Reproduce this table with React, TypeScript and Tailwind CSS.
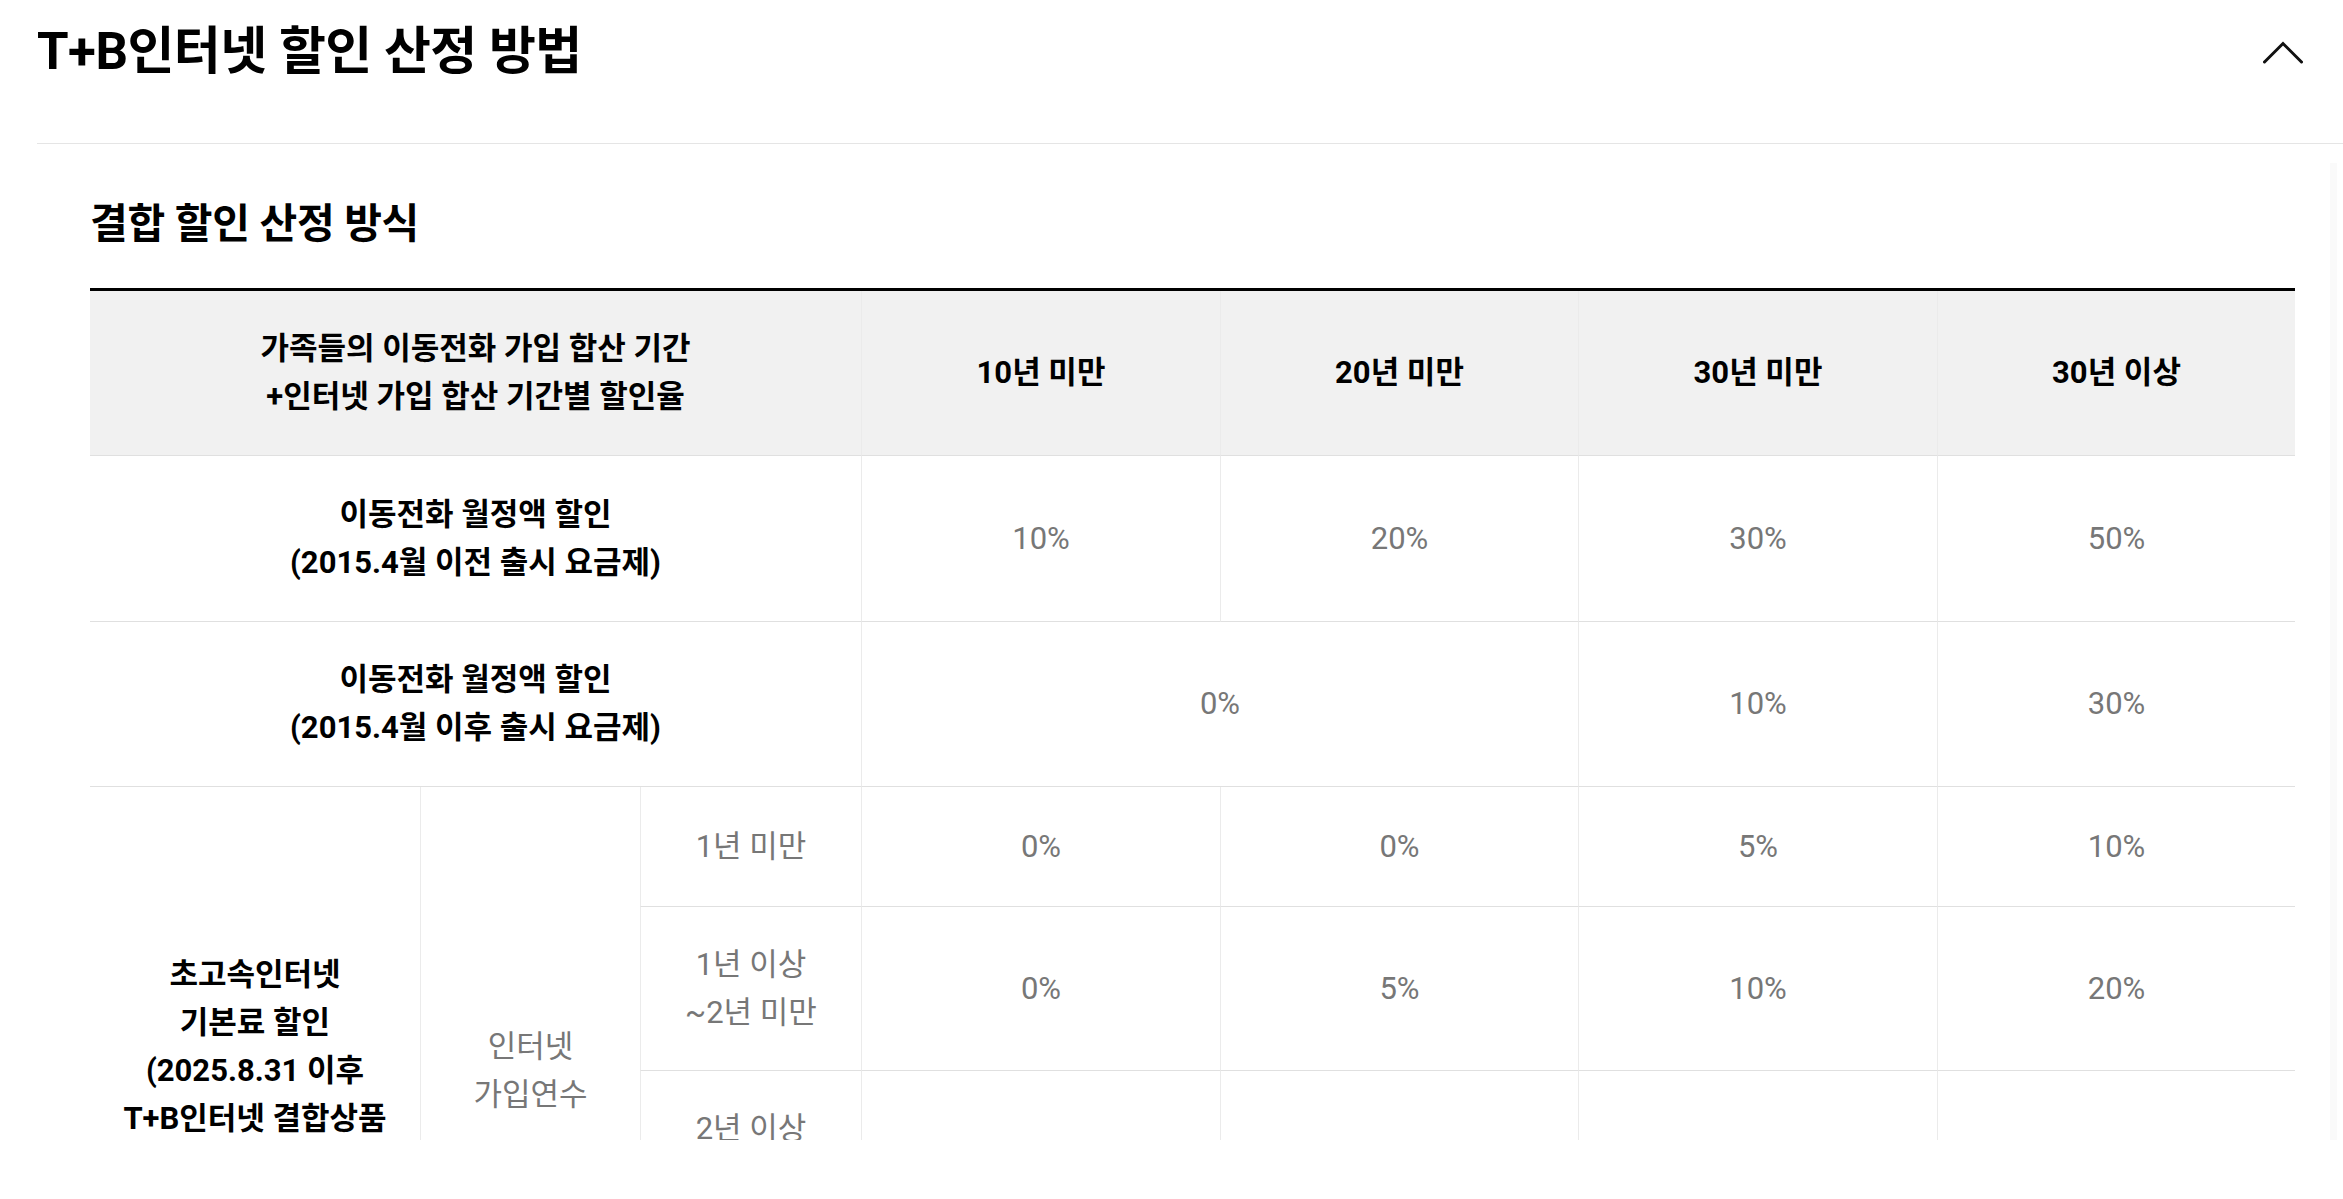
import React from "react";

type CellProps = {
  children?: React.ReactNode;
  className?: string;
  left?: boolean;
  kind?: "head" | "label" | "value";
};

function Cell({ children, className = "", left = true, kind = "value" }: CellProps) {
  const base =
    "flex items-center justify-center text-center border-b border-b-[#e0e0e0] text-[31px] leading-[48px]";
  const leftB = left ? " border-l border-l-[#ebebeb]" : "";
  const k =
    kind === "head"
      ? " bg-[#f1f1f1] font-bold text-black"
      : kind === "label"
      ? " font-bold text-black"
      : " text-[#777777]";
  return <div className={base + leftB + k + " " + className}>{children}</div>;
}

export default function App() {
  return (
    <div className="w-[2343px] h-[1199px] bg-white font-['Roboto','Noto_Sans_CJK_KR',sans-serif] text-black overflow-hidden">
      <div className="pl-[37px]">
        <div className="flex justify-between h-[144px] border-b border-b-[#e5e5e5] pr-[40px]">
          <h2 className="mt-[22px] text-[51px] leading-[60px] font-bold tracking-[-0.5px]">
            T+B인터넷 할인 산정 방법
          </h2>
          <svg
            className="mt-[41px]"
            width="40"
            height="23"
            viewBox="0 0 40 23"
            fill="none"
            stroke="#111"
            strokeWidth="3"
            strokeLinecap="round"
          >
            <polyline points="1.5,21 20,2.5 38.5,21" />
          </svg>
        </div>
        <div className="flex h-[996px] overflow-hidden">
          <div className="flex-1 pl-[53px] pt-[56px]">
            <h3 className="text-[41px] leading-[48px] font-bold tracking-[-0.3px]">
              결합 할인 산정 방식
            </h3>
            <div className="mt-[40px] w-[2205px] border-t-[3px] border-t-black grid grid-cols-[330px_220px_221px_359px_358px_359px_358px] grid-rows-[165px_166px_165px_120px_164px_164px_120px]">
              {/* header */}
              <Cell kind="head" left={false} className="col-span-3">
                <span>
                  가족들의 이동전화 가입 합산 기간
                  <br />
                  +인터넷 가입 합산 기간별 할인율
                </span>
              </Cell>
              <Cell kind="head">10년 미만</Cell>
              <Cell kind="head">20년 미만</Cell>
              <Cell kind="head">30년 미만</Cell>
              <Cell kind="head">30년 이상</Cell>

              {/* row 1 */}
              <Cell kind="label" left={false} className="col-span-3">
                <span>
                  이동전화 월정액 할인
                  <br />
                  (2015.4월 이전 출시 요금제)
                </span>
              </Cell>
              <Cell>10%</Cell>
              <Cell>20%</Cell>
              <Cell>30%</Cell>
              <Cell>50%</Cell>

              {/* row 2 */}
              <Cell kind="label" left={false} className="col-span-3">
                <span>
                  이동전화 월정액 할인
                  <br />
                  (2015.4월 이후 출시 요금제)
                </span>
              </Cell>
              <Cell className="col-span-2">0%</Cell>
              <Cell>10%</Cell>
              <Cell>30%</Cell>

              {/* row 3 */}
              <Cell kind="label" left={false} className="row-span-4">
                <span>
                  초고속인터넷
                  <br />
                  기본료 할인
                  <br />
                  (2025.8.31 이후
                  <br />
                  T+B인터넷 결합상품
                  <br />
                  가입 고객)
                </span>
              </Cell>
              <Cell className="row-span-4">
                <span>
                  인터넷
                  <br />
                  가입연수
                </span>
              </Cell>
              <Cell>1년 미만</Cell>
              <Cell>0%</Cell>
              <Cell>0%</Cell>
              <Cell>5%</Cell>
              <Cell>10%</Cell>

              {/* row 4 */}
              <Cell>
                <span>
                  1년 이상
                  <br />
                  ~2년 미만
                </span>
              </Cell>
              <Cell>0%</Cell>
              <Cell>5%</Cell>
              <Cell>10%</Cell>
              <Cell>20%</Cell>

              {/* row 5 */}
              <Cell>
                <span>
                  2년 이상
                  <br />
                  ~3년 미만
                </span>
              </Cell>
              <Cell>5%</Cell>
              <Cell>10%</Cell>
              <Cell>20%</Cell>
              <Cell>30%</Cell>

              {/* row 6 */}
              <Cell>3년 이상</Cell>
              <Cell>10%</Cell>
              <Cell>20%</Cell>
              <Cell>30%</Cell>
              <Cell>40%</Cell>
            </div>
          </div>
          <div className="w-[13px] pt-[19px]">
            <div className="w-[7px] h-full bg-[#fafafa]" />
          </div>
        </div>
      </div>
    </div>
  );
}
